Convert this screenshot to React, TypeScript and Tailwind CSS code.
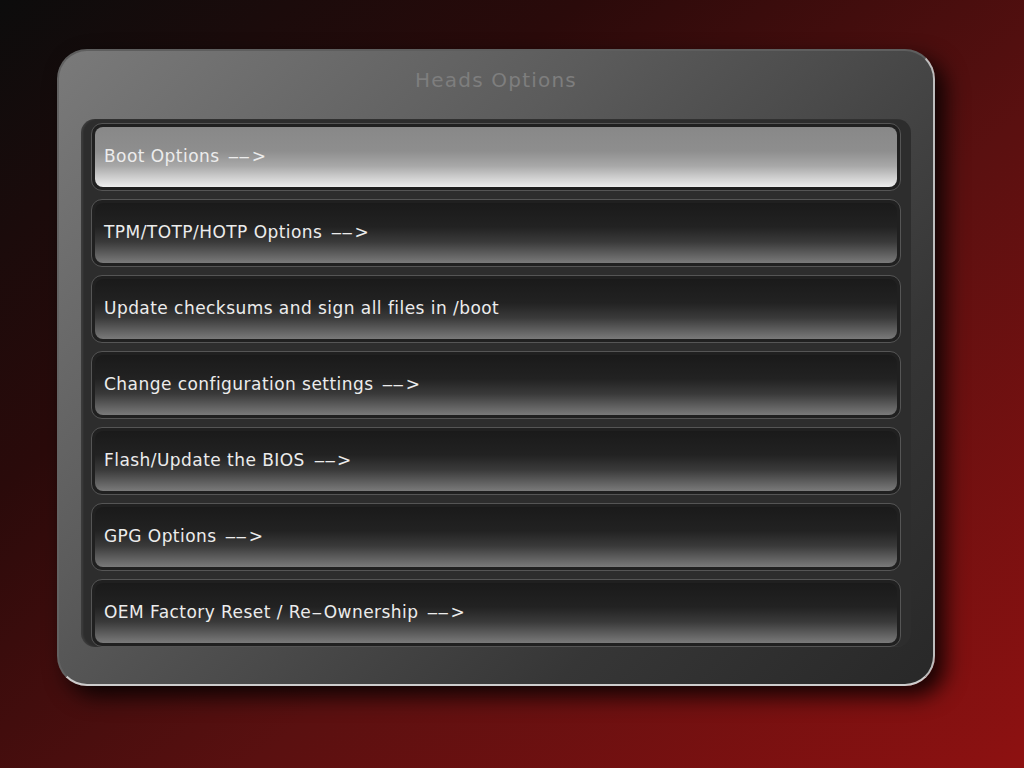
import React from "react";

const items = [
  "Boot Options -->",
  "TPM/TOTP/HOTP Options -->",
  "Update checksums and sign all files in /boot",
  "Change configuration settings -->",
  "Flash/Update the BIOS -->",
  "GPG Options -->",
  "OEM Factory Reset / Re-Ownership -->",
];

function Label({ text }: { text: string }) {
  const parts = text.split(/(-+)/);
  return (
    <span className="text-[17px] text-[#ececec] tracking-[0.45px]">
      {parts.map((p, i) =>
        p === "--" ? (
          <span key={i} className="inline-block tracking-[-1px] scale-x-[2.1] origin-left ml-[2px] mr-[14px]">
            {p}
          </span>
        ) : p === "-" ? (
          <span key={i} className="inline-block scale-x-[1.9] origin-left mr-[6px]">
            {p}
          </span>
        ) : (
          <React.Fragment key={i}>{p}</React.Fragment>
        )
      )}
    </span>
  );
}

export default function App() {
  return (
    <div
      className="min-h-[768px] w-full pt-[49px] pl-[57px] bg-[linear-gradient(140deg,#0c0c0c_0%,#2a0a0a_30%,#5a1010_60%,#8e1111_100%)]"
      style={{ fontFamily: '"DejaVu Sans", sans-serif' }}
    >
      <div className="w-[878px] h-[637px] rounded-[30px] border-2 border-t-[#5e5e5e] border-l-[#626262] border-b-[#cdcdcd] border-r-[#bdbdbd] bg-[linear-gradient(135deg,#7a7a7a_0%,#5c5c5c_35%,#363636_75%,#282828_100%)] shadow-[10px_10px_22px_rgba(0,0,0,0.85)] px-[22px] flex flex-col">
        <div className="h-[68px] flex items-start justify-center pt-[14px]">
          <span className="text-[20px] text-[#7e7e7e] tracking-[1.2px]">Heads Options</span>
        </div>
        <div className="h-[528px] rounded-[14px] bg-[#2d2d2d] shadow-[inset_2px_0_2px_rgba(255,255,255,0.08)] px-[10px] pt-[4px] overflow-hidden flex flex-col gap-[8px]">
          {items.map((t, i) => (
            <div
              key={i}
              className="h-[68px] shrink-0 rounded-[11px] border border-[#555555] bg-[#202020] p-[3px]"
            >
              <div
                className={
                  i === 0
                    ? "h-full rounded-[8px] bg-[linear-gradient(180deg,#888888_0%,#8e8e8e_40%,#a8a8a8_65%,#eeeeee_100%)] flex items-center pl-[9px]"
                    : "h-full rounded-[8px] bg-[linear-gradient(180deg,#1a1a1a_0%,#222222_40%,#3a3a3a_65%,#7a7a7a_100%)] flex items-center pl-[9px]"
                }
              >
                <Label text={t} />
              </div>
            </div>
          ))}
        </div>
      </div>
    </div>
  );
}
